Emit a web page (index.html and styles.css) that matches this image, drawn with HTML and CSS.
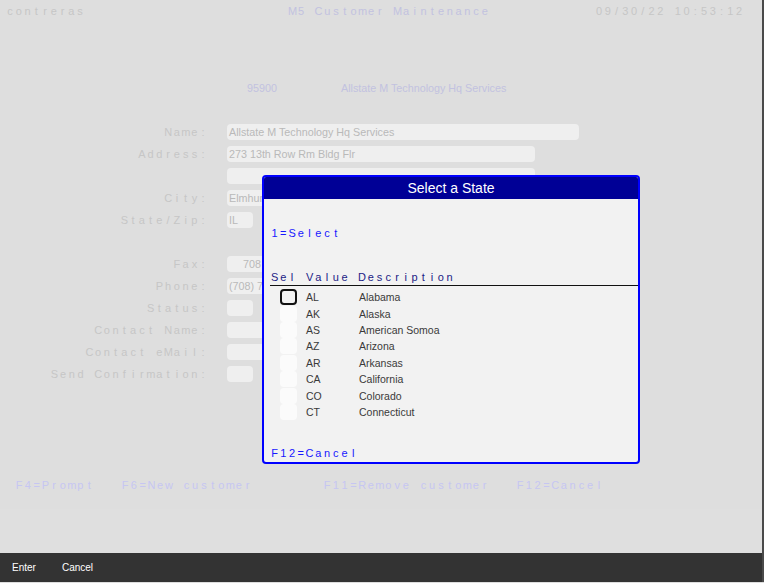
FILE: index.html
```html
<!DOCTYPE html>
<html>
<head>
<meta charset="utf-8">
<link rel="stylesheet" href="styles.css">
</head>
<body>
<div class="page">
  <div class="screen">
    <div class="hdr">
      <span class="sp muted">contreras</span>
      <span class="sp lav">M5 Customer Maintenance</span>
      <span class="sp muted">09/30/22 10:53:12</span>
    </div>
    <div class="cust">
      <span class="lav">95900</span>
      <span class="lav">Allstate M Technology Hq Services</span>
    </div>
    <div class="form">
      <span class="lbl sp">Name:</span><div class="fld"><span class="box w352">Allstate M Technology Hq Services</span></div>
      <span class="lbl sp">Address:</span><div class="fld"><span class="box w308">273 13th Row Rm Bldg Flr</span></div>
      <span class="lbl sp"></span><div class="fld"><span class="box w308"></span></div>
      <span class="lbl sp">City:</span><div class="fld"><span class="box w308">Elmhurst</span></div>
      <span class="lbl sp">State/Zip:</span><div class="fld"><span class="box w26">IL</span></div>
      <span class="lbl sp"></span><div class="fld"></div>
      <span class="lbl sp">Fax:</span><div class="fld"><span class="box w100 ind">708 555-0199</span></div>
      <span class="lbl sp">Phone:</span><div class="fld"><span class="box w100">(708) 755-0100</span></div>
      <span class="lbl sp">Status:</span><div class="fld"><span class="box w26"></span></div>
      <span class="lbl sp">Contact Name:</span><div class="fld"><span class="box w308"></span></div>
      <span class="lbl sp">Contact eMail:</span><div class="fld"><span class="box w308"></span></div>
      <span class="lbl sp">Send Confirmation:</span><div class="fld"><span class="box w26"></span></div>
    </div>
    <div class="fkeys">
      <span class="sp">F4=Prompt</span>
      <span class="sp">F6=New customer</span>
      <span class="sp">F11=Remove customer</span>
      <span class="sp">F12=Cancel</span>
    </div>
  </div>
  <div class="filler"></div>
  <div class="bar">
    <span class="btn">Enter</span>
    <span class="btn">Cancel</span>
  </div>

  <div class="dlg">
    <div class="dlg-title">Select a State</div>
    <div class="dlg-body">
      <div class="sp blue opt">1=Select</div>
      <div class="sp head">Sel Value Description</div>
      <div class="list">
        <div class="row"><span class="chk on"></span><span>AL</span><span>Alabama</span></div>
        <div class="row"><span class="chk"></span><span>AK</span><span>Alaska</span></div>
        <div class="row"><span class="chk"></span><span>AS</span><span>American Somoa</span></div>
        <div class="row"><span class="chk"></span><span>AZ</span><span>Arizona</span></div>
        <div class="row"><span class="chk"></span><span>AR</span><span>Arkansas</span></div>
        <div class="row"><span class="chk"></span><span>CA</span><span>California</span></div>
        <div class="row"><span class="chk"></span><span>CO</span><span>Colorado</span></div>
        <div class="row"><span class="chk"></span><span>CT</span><span>Connecticut</span></div>
      </div>
      <div class="sp blue foot">F12=Cancel</div>
    </div>
  </div>
</div>
<script src="cells.js"></script>
</body>
</html>
```

FILE: cells.js
```js
document.querySelectorAll('.sp').forEach(function (el) {
  var text = el.textContent;
  el.textContent = '';
  for (var i = 0; i < text.length; i++) {
    var s = document.createElement('span');
    s.className = 'c';
    s.textContent = text[i] === ' ' ? '\u00a0' : text[i];
    el.appendChild(s);
  }
});
```

FILE: styles.css
```css
html, body {
  margin: 0;
  padding: 0;
  background: #dedede;
}
body {
  font-family: "Liberation Sans", Arial, sans-serif;
  font-size: 11px;
}
.page {
  position: relative;
  width: 762px;
  height: 582px;
  border-right: 2px solid #4a4a4a;
  display: flex;
  flex-direction: column;
}
.screen {
  height: 509px;
  background: #dedede;
}
.filler {
  flex: 1;
  background: #dfdfdf;
}
.sp {
  white-space: pre;
}
.c {
  display: inline-block;
  width: 8.75px;
  text-align: center;
}
.muted { color: #c6c6c6; }
.lav { color: #c2c2e0; }

.hdr {
  display: grid;
  grid-template-columns: 282.3px 306.7px auto;
  padding-left: 5.6px;
  height: 22px;
  line-height: 22px;
}
.cust {
  display: grid;
  grid-template-columns: 94px auto;
  padding-left: 247px;
  margin-top: 59px;
  line-height: 14px;
  font-size: 10.75px;
}
.form {
  margin-top: 26px;
  display: grid;
  grid-template-columns: 227px 1fr;
  grid-auto-rows: 22px;
}
.lbl {
  text-align: right;
  padding-right: 19.5px;
  line-height: 22px;
  color: #c6c6c6;
}
.fld {
  padding-top: 3px;
}
.box {
  display: block;
  height: 16px;
  line-height: 16px;
  border-radius: 4px;
  background: #efefef;
  color: #b9b9b9;
  font-size: 10.75px;
  padding-left: 2px;
  box-sizing: border-box;
  overflow: hidden;
  white-space: nowrap;
}
.box.ind { padding-left: 16px; }
.w352 { width: 352px; }
.w308 { width: 308px; }
.w100 { width: 100px; }
.w26 { width: 26px; }

.fkeys {
  margin-top: 93px;
  display: grid;
  grid-template-columns: 106px 202px 193px auto;
  padding-left: 14.8px;
  line-height: 14px;
  color: #c6c6f2;
}

.bar {
  height: 29px;
  background: #333333;
  display: flex;
  align-items: center;
  padding-left: 12px;
  gap: 26px;
}
.btn {
  color: #ffffff;
  font-size: 10px;
}

.dlg {
  position: absolute;
  left: 262px;
  top: 175px;
  width: 378px;
  height: 289px;
  box-sizing: border-box;
  border: 2px solid #0000ff;
  border-radius: 4px;
  background: #f2f2f2;
  display: flex;
  flex-direction: column;
  overflow: hidden;
}
.dlg-title {
  height: 22px;
  line-height: 22px;
  background: #000096;
  color: #ffffff;
  text-align: center;
  font-size: 14px;
}
.dlg-body {
  flex: 1;
  display: flex;
  flex-direction: column;
  padding-left: 6.2px;
}
.blue { color: #1818ff; }
.opt {
  margin-top: 27px;
  line-height: 14px;
}
.head {
  margin-top: 30px;
  line-height: 15px;
  height: 15px;
  color: #1c1c86;
  border-bottom: 1px solid #111111;
}
.list {
  padding-top: 3px;
  display: flex;
  flex-direction: column;
}
.row {
  display: grid;
  grid-template-columns: 17px 44px auto;
  column-gap: 9px;
  padding-left: 9.8px;
  height: 16.43px;
  align-items: center;
  color: #3a3a3a;
  font-size: 10.5px;
}
.chk {
  height: 16px;
  box-sizing: border-box;
  border-radius: 4px;
  background: #fbfbfb;
}
.chk.on {
  background: #f2f2f2;
  border: 2px solid #111111;
}
.foot {
  margin-top: auto;
  margin-bottom: 2px;
  line-height: 14px;
}
```
